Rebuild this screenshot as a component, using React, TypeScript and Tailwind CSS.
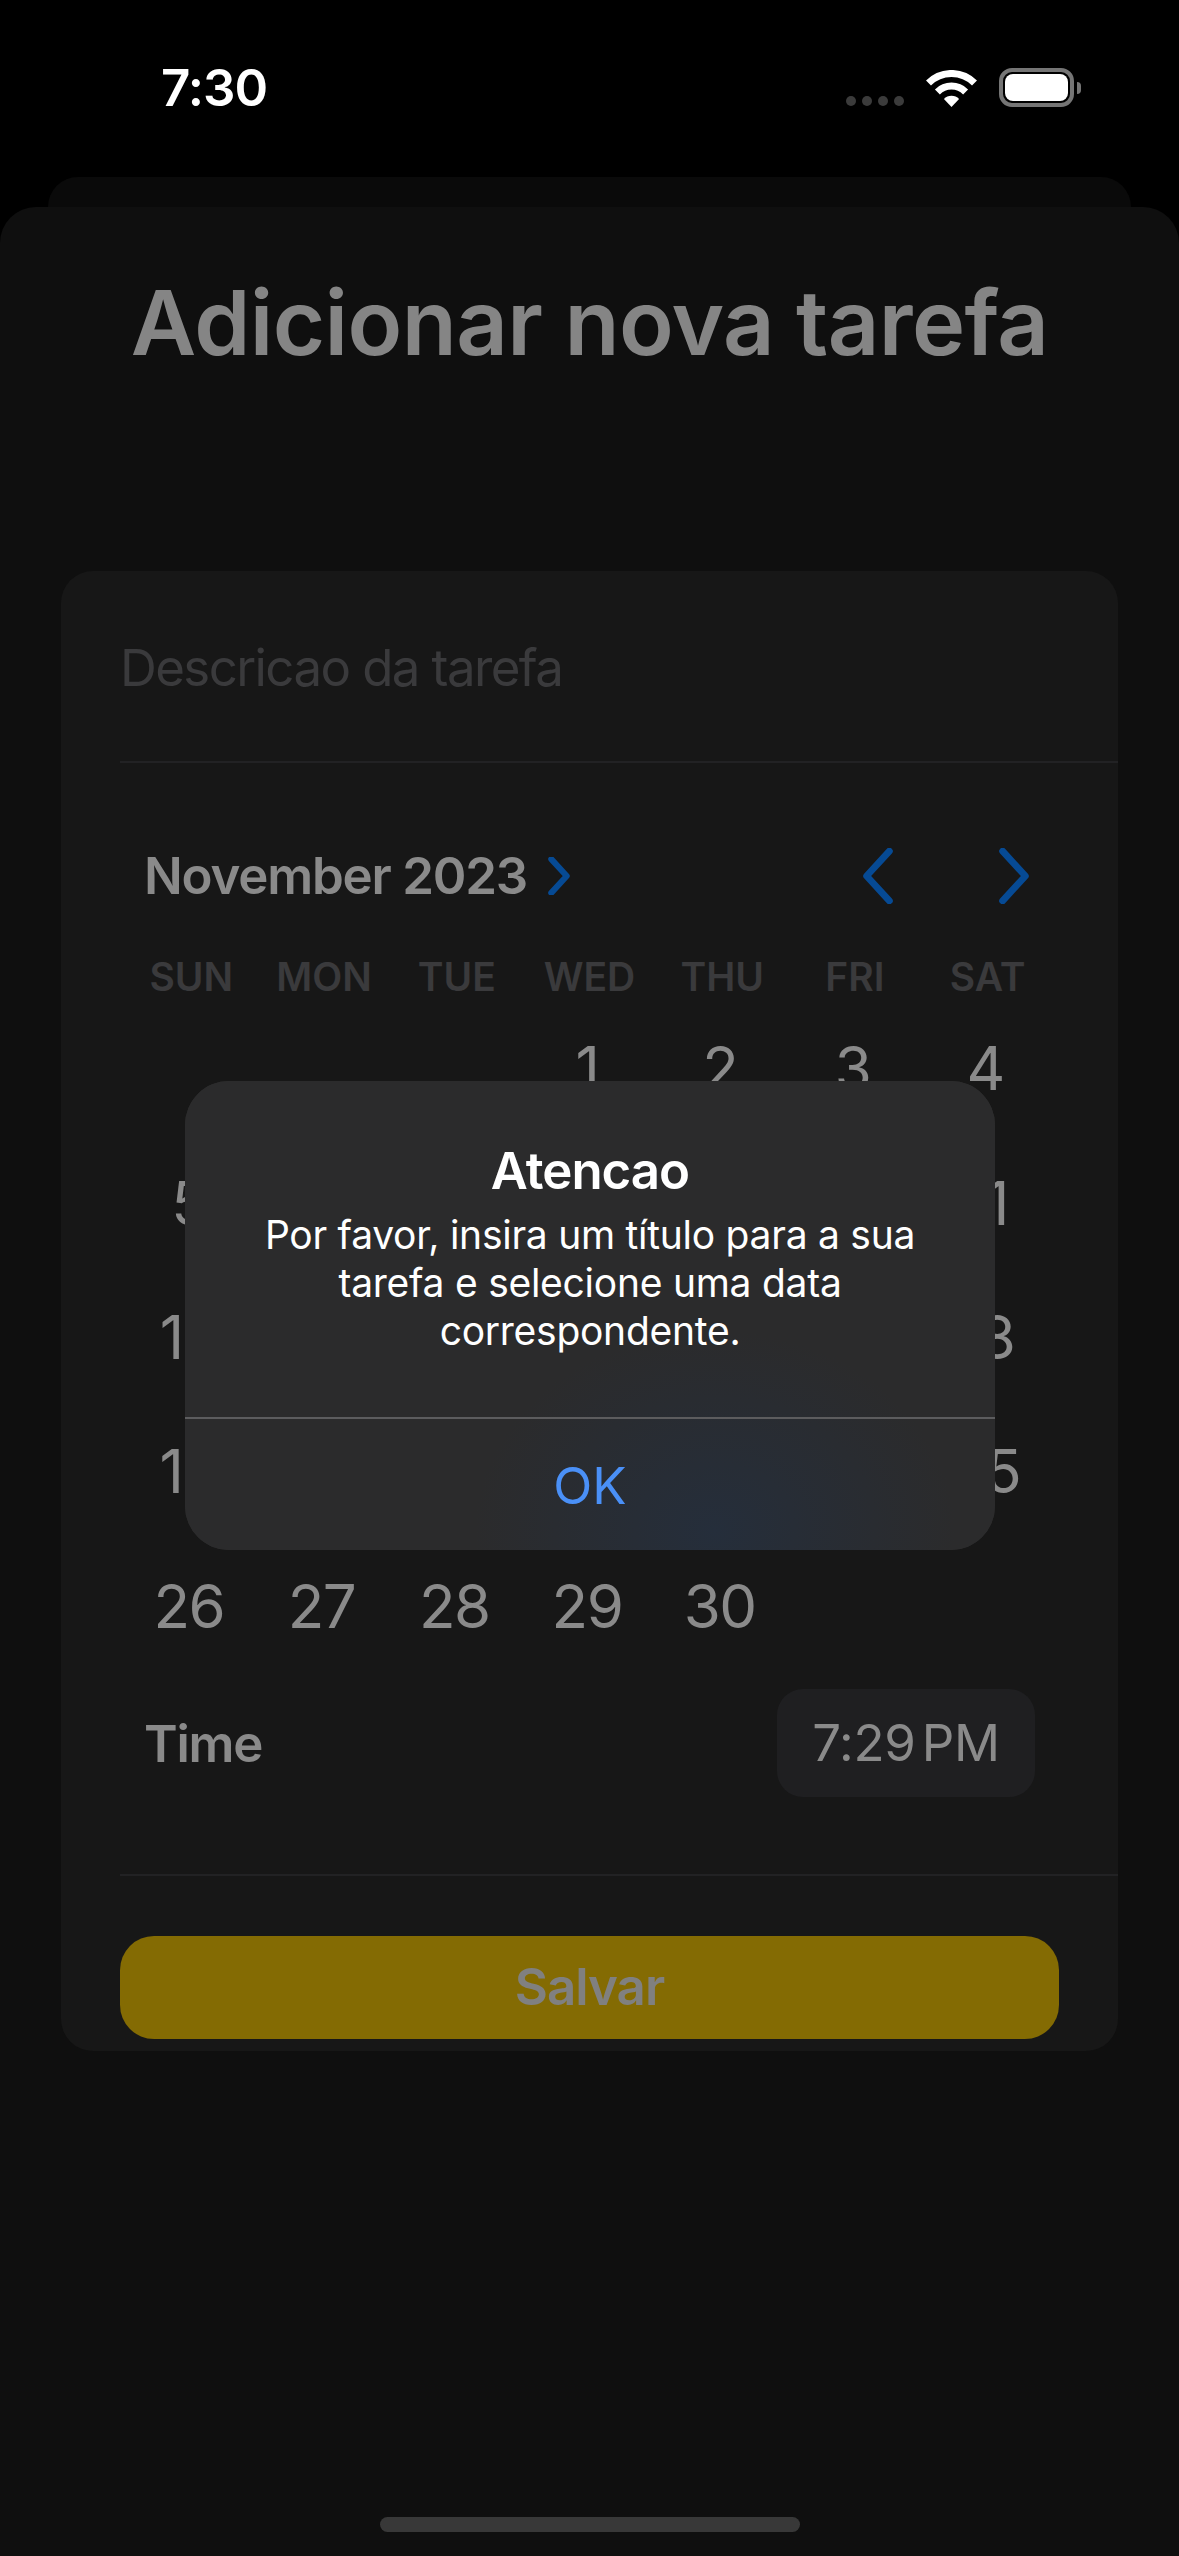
import React from 'react';

const WEEKDAYS = ['SUN', 'MON', 'TUE', 'WED', 'THU', 'FRI', 'SAT'];
const DAYS: (number | null)[] = [
  null, null, null, ...Array.from({ length: 30 }, (_, i) => i + 1),
];

const Chevron: React.FC<{ left?: boolean; width?: number; className: string }> = ({ left, width = 6.5, className }) => (
  <svg viewBox="0 0 32 54" className={className} fill="none" stroke="#064a94" strokeWidth={width} strokeLinecap="round" strokeLinejoin="round">
    <path d={left ? 'M27 3 5 27l22 24' : 'M5 3l22 24L5 51'} />
  </svg>
);

const StatusBar: React.FC = () => (
  <div className="h-[177px] flex items-start justify-between pl-[161px] pr-[98px] pt-[58px] bg-black">
    <span className="text-[51px] leading-[60px] font-semibold text-white tracking-[-1px]">7:30</span>
    <div className="flex items-end gap-[22px] pt-[10px]">
      <div className="flex gap-[6px] pb-[1px]">
        {[0, 1, 2, 3].map(i => <div key={i} className="w-[10px] h-[10px] rounded-full bg-[#3b3b3b]" />)}
      </div>
      <svg viewBox="0 0 51 37" className="w-[51px] h-[37px]" fill="none" stroke="#fff" strokeWidth="7">
        <path d="M2.5 13A32.5 32.5 0 0 1 48.5 13" />
        <path d="M11.4 21.9A20 20 0 0 1 39.6 21.9" />
        <path d="M25.5 37 17.9 29A10.5 10.5 0 0 1 33.1 29Z" fill="#fff" stroke="none" />
      </svg>
      <div className="flex items-center gap-[3px]">
        <div className="w-[75px] h-[39px] rounded-[13px] border-[4px] border-[#757575] p-[2px]">
          <div className="w-full h-full rounded-[8px] bg-white" />
        </div>
        <div className="w-[4px] h-[12px] rounded-r-full bg-[#757575]" />
      </div>
    </div>
  </div>
);

const Calendar: React.FC = () => (
  <div className="pl-[64px] pr-[64px]">
    <div className="flex items-center justify-between h-[60px] pl-[19px] pr-[22px]">
      <div className="flex items-center gap-[20px]">
        <span className="text-[51px] leading-[60px] font-semibold text-[#8a8a8a] tracking-[-1.2px]">November 2023</span>
        <Chevron width={8.5} className="w-[24px] h-[38px]" />
      </div>
      <div className="flex items-center gap-[102px] pr-[1px]">
        <Chevron left className="w-[34px] h-[56px]" />
        <Chevron className="w-[34px] h-[56px]" />
      </div>
    </div>
    <div className="grid grid-cols-7 mt-[47px]">
      {WEEKDAYS.map(d => (
        <div key={d} className="text-center text-[39px] leading-[48px] font-semibold text-[#3a3a3c]">{d}</div>
      ))}
    </div>
    <div className="grid grid-cols-7 auto-rows-[134.4px]">
      {DAYS.map((d, i) => (
        <div key={i} className="flex items-center justify-center pr-[5px] text-[60px] text-[#8a8a8a] tracking-[-1.5px]">{d}</div>
      ))}
    </div>
  </div>
);

const Alert: React.FC = () => (
  <div className="absolute left-[185px] top-[1081px] w-[810px] h-[469px] rounded-[44px] overflow-hidden flex flex-col bg-[#2b2b2b]">
    <div className="absolute inset-0 bg-[radial-gradient(ellipse_240px_200px_at_530px_450px,#252e3b_0%,#2b2b2c_100%)]" />
    <div className="relative h-[336px] flex flex-col items-center pt-[60px] text-white">
      <div className="text-[51px] leading-[60px] font-semibold tracking-[-1px]">Atencao</div>
      <div className="text-[39px] leading-[48px] text-center mt-[10px] w-[700px] tracking-[-0.26px]">
        Por favor, insira um título para a sua tarefa e selecione uma data correspondente.
      </div>
    </div>
    <div className="relative h-[2px] bg-[#5c5c5e]" />
    <div className="relative flex-1 flex items-center justify-center pt-[3px] text-[51px] text-[#4a90f7]">OK</div>
  </div>
);

const App: React.FC = () => (
  <div className="relative w-[1179px] h-[2556px] overflow-hidden bg-black font-[Inter,sans-serif]">
    <StatusBar />
    <div className="mx-[48px] h-[30px] rounded-t-[30px] bg-[#0a0a0a]" />
    <div className="h-[2349px] rounded-t-[36px] bg-[#0f0f0f] flex flex-col">
      <h1 className="pt-[66px] text-center text-[90px] leading-[100px] font-semibold text-[#858585] tracking-[-0.6px]">
        Adicionar nova tarefa
      </h1>
      <div className="mt-[198px] mx-[61px] h-[1480px] rounded-[32px] bg-[#171717] flex flex-col">
        <div className="h-[192px] ml-[59px] border-b-2 border-[#222224] pt-[67px]">
          <span className="block text-[51px] leading-[60px] text-[#3a3a3c] tracking-[-1.6px]">Descricao da tarefa</span>
        </div>
        <div className="pt-[83px]">
          <Calendar />
        </div>
        <div className="flex items-center justify-between h-[108px] mt-[16px] pl-[83px] pr-[83px]">
          <span className="pt-[3px] text-[51px] font-semibold text-[#8a8a8a] tracking-[-1.2px]">Time</span>
          <div className="w-[258px] h-[108px] rounded-[26px] bg-[#1f1f21] flex items-center justify-center text-[51px] text-[#8a8a8a] tracking-[-0.3px]">
            7:29<span className="ml-[6px]">PM</span>
          </div>
        </div>
        <div className="ml-[59px] mt-[77px] border-b-2 border-[#222224]" />
        <div className="ml-[59px] mr-[59px] mt-[60px] h-[103px] rounded-[34px] bg-[#846b03] flex items-center justify-center text-[51px] font-semibold text-[#808080] tracking-[-1px]">
          Salvar
        </div>
      </div>
      <div className="mt-auto mb-[24px] mx-auto w-[420px] h-[15px] rounded-full bg-[#383838]" />
    </div>
    <Alert />
  </div>
);

export default App;
